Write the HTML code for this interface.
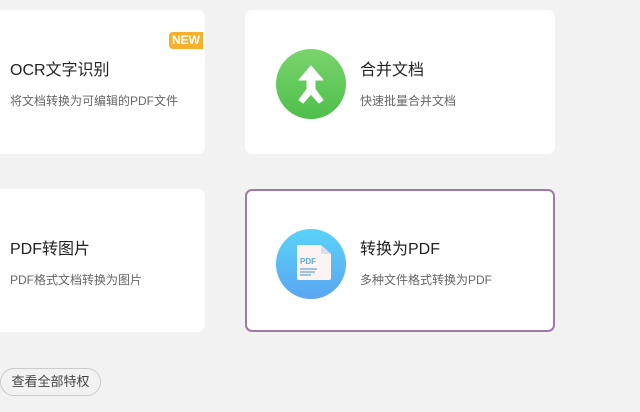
<!DOCTYPE html>
<html><head><meta charset="utf-8"><style>
body{margin:0;width:640px;height:412px;background:#f2f2f2;position:relative;overflow:hidden;font-family:"Liberation Sans","Noto Sans CJK SC",sans-serif}
.card{position:absolute;background:#fff;border-radius:7px;box-sizing:border-box}
.t{position:absolute;font-size:16px;color:#222;white-space:nowrap}
.s{position:absolute;font-size:12px;color:#666;white-space:nowrap}
.ic{position:absolute;width:70px;height:70px;border-radius:50%}
</style></head><body>
<div class="card" style="left:-10px;top:10px;width:215px;height:144px"></div>
<div style="position:absolute;left:169px;top:32px;width:34px;height:17px;background:#f7b02c;border-radius:4px 0 0 4px;color:#fff;font-size:12px;font-weight:bold;line-height:17px;text-align:center">NEW</div>
<div class="t" style="left:10px;top:56px">OCR文字识别</div>
<div class="s" style="left:10px;top:92px">将文档转换为可编辑的PDF文件</div>

<div class="card" style="left:245px;top:10px;width:310px;height:144px"></div>
<div class="ic" style="left:276px;top:49px;background:linear-gradient(#7ad46c,#4fbf4c)"></div>
<svg style="position:absolute;left:276px;top:49px" width="70" height="70" viewBox="0 0 70 70"><path d="M35 17 L23 31 H31 V40 L23 51 L27 54 L35 45 L43 54 L47 51 L39 40 V31 H47 Z" fill="#fff" stroke="#fff" stroke-linejoin="round" stroke-width="1"/></svg>
<div class="t" style="left:360px;top:56px">合并文档</div>
<div class="s" style="left:360px;top:92px">快速批量合并文档</div>

<div class="card" style="left:-10px;top:189px;width:215px;height:143px"></div>
<div class="t" style="left:10px;top:235px">PDF转图片</div>
<div class="s" style="left:10px;top:271px">PDF格式文档转换为图片</div>

<div class="card" style="left:245px;top:189px;width:310px;height:143px;border:2px solid #a07aa6"></div>
<div class="ic" style="left:276px;top:229px;background:linear-gradient(#5ad3f7,#5aa5f2)"></div>
<svg style="position:absolute;left:276px;top:229px" width="70" height="70" viewBox="0 0 70 70"><path d="M21 16 H45 L55 25 V49 Q55 51 53 51 H23 Q21 51 21 49 Z" fill="#fbf4f2"/><path d="M45 16 V25 H55 Z" fill="#dde"/><text x="24" y="35" font-size="8" font-weight="bold" fill="#5aa8ee" font-family="Liberation Sans">PDF</text><path d="M24 40 H41 M24 43 H39 M24 46 H35" stroke="#6aa0dc" stroke-width="1.2"/></svg>
<div class="t" style="left:360px;top:235px">转换为PDF</div>
<div class="s" style="left:360px;top:271px">多种文件格式转换为PDF</div>

<div style="position:absolute;left:0;top:368px;width:101px;height:28px;border:1px solid #ccc;border-radius:14px;box-sizing:border-box;font-size:13px;color:#444;line-height:26px;text-align:center">查看全部特权</div>
</body></html>
